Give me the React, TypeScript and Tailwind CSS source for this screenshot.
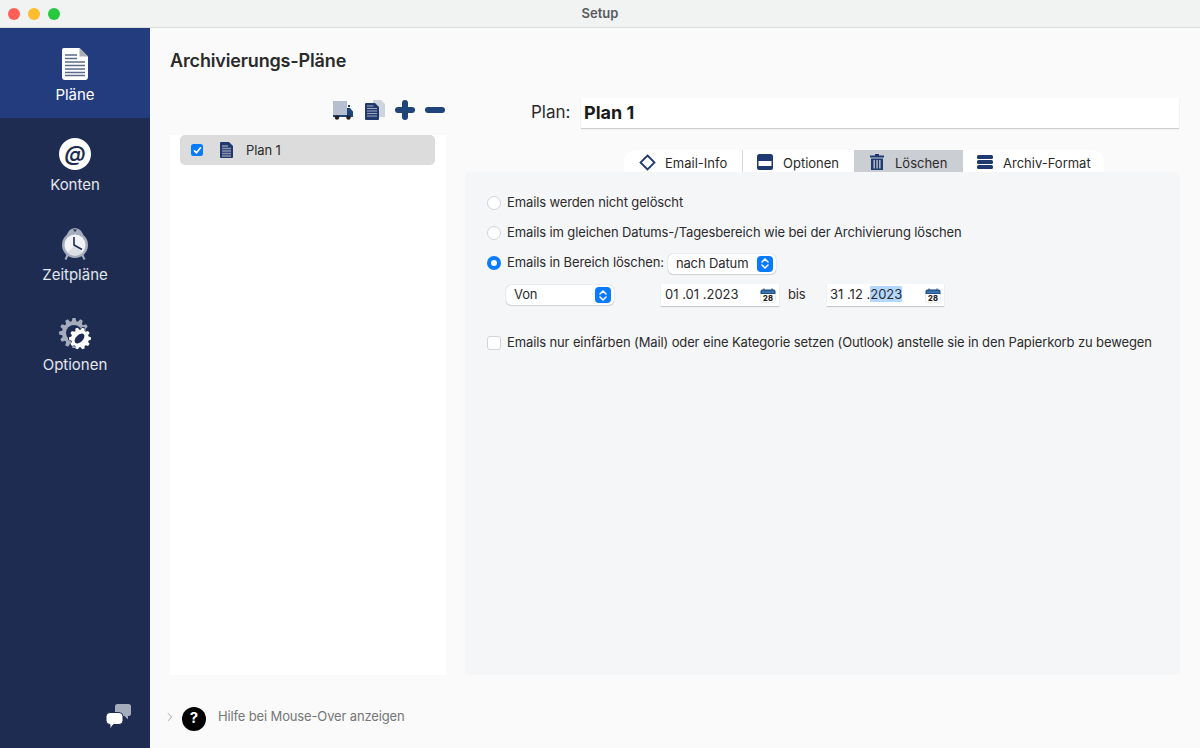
import { ChevronRight } from "lucide-react";

const FONT = "font-['Inter','Noto_Sans',sans-serif]";

function PlanIcon() {
  return (
    <svg width="28" height="32" viewBox="0 0 28 32">
      <path d="M3 0h15.5L27 8.5V29a3 3 0 0 1-3 3H4a3 3 0 0 1-3-3V2a2 2 0 0 1 2-2z" fill="#fff" />
      <path d="M18.5 0L27 8.5h-8.5z" fill="#a9adb5" />
      <path d="M4 7h12M4 10.5h12M4 14h20M4 17.5h20M4 21h20M4 24.5h20M4 27.5h20" stroke="#5d6a8a" strokeWidth="1.6" />
    </svg>
  );
}

function AtIcon() {
  return (
    <div className="flex h-8 w-8 items-center justify-center rounded-full bg-white pb-[2px] text-[21px] font-semibold italic leading-none text-[#1e2c52]">
      @
    </div>
  );
}

function ClockIcon() {
  return (
    <svg width="30" height="32" viewBox="0 0 30 32">
      <path d="M6 10Q8 0 15 0Q22 0 24 10z" fill="#a5adbd" />
      <path d="M13 1.5h4l-2 2.5z" fill="#1e2c52" />
      <path d="M8 26l-2.5 5.5M22 26l2.5 5.5" stroke="#a5adbd" strokeWidth="2" />
      <circle cx="15" cy="17" r="13" fill="#a5adbd" />
      <circle cx="15" cy="17" r="10.5" fill="#f2f3f6" />
      <path d="M7.5 24.5a10.5 10.5 0 0 0 15 0L15 17z" fill="#dcdfe6" />
      <path d="M14 9v8l8 4.5" stroke="#1e2c52" strokeWidth="1.6" fill="none" />
    </svg>
  );
}

function gearPath(cx: number, cy: number, r: number, teeth: number) {
  const pts: string[] = [];
  for (let i = 0; i < teeth; i++) {
    const a = (i / teeth) * Math.PI * 2;
    const w = Math.PI / teeth / 1.8;
    const inner = r * 0.8;
    const p = [
      [a - w * 1.3, inner],
      [a - w * 0.7, r],
      [a + w * 0.7, r],
      [a + w * 1.3, inner],
    ];
    p.forEach(([t, d]) => pts.push(`${(cx + Math.cos(t) * d).toFixed(2)},${(cy + Math.sin(t) * d).toFixed(2)}`));
  }
  return pts.join(" ");
}

function GearIcon() {
  return (
    <svg width="32" height="32" viewBox="0 0 32 32">
      <polygon points={gearPath(15, 15, 15, 12)} fill="#a5adbd" />
      <circle cx="15" cy="15" r="8" fill="#1e2c52" />
      <polygon points={gearPath(21, 20.5, 12, 10)} fill="#1e2c52" />
      <polygon points={gearPath(21, 20.5, 11, 10)} fill="#fff" />
      <ellipse cx="20.5" cy="20.5" rx="6" ry="3.5" transform="rotate(-45 20.5 20.5)" fill="#1e2c52" />
    </svg>
  );
}

function NavItem({ label, icon, active }: { label: string; icon: React.ReactNode; active?: boolean }) {
  return (
    <div className={`flex h-[90px] flex-col items-center pt-[20px] ${active ? "bg-[#233c7d]" : ""}`}>
      <div className="flex h-[32px] items-center justify-center">{icon}</div>
      <span className={`mt-[5px] text-[15px] leading-[20px] ${active ? "text-white" : "text-[#e4e6ec]"}`}>{label}</span>
    </div>
  );
}

function Radio({ on }: { on?: boolean }) {
  return on ? (
    <span className="flex h-[14px] w-[14px] items-center justify-center rounded-full bg-[#0a7aff]">
      <span className="h-[6px] w-[6px] rounded-full bg-white" />
    </span>
  ) : (
    <span className="h-[14px] w-[14px] rounded-full border border-[#d3d4d7] bg-white" />
  );
}

function Stepper() {
  return (
    <span className="flex h-[16px] w-[16px] items-center justify-center rounded-[4px] bg-[#0a7aff]">
      <svg width="10" height="13" viewBox="0 0 10 13" fill="none" stroke="#fff" strokeWidth="1.5" strokeLinecap="round" strokeLinejoin="round">
        <path d="M2 5l3-3 3 3M2 8l3 3 3-3" />
      </svg>
    </span>
  );
}

function Select({ label, className }: { label: string; className: string }) {
  return (
    <div className={`flex h-[20px] items-center justify-between rounded-[5px] bg-white pl-[8px] pr-[3px] text-[13px] text-[#2b2b2b] shadow-[0_0_1px_rgba(0,0,0,0.35),0_1px_1px_rgba(0,0,0,0.12)] ${className}`}>
      <span>{label}</span>
      <Stepper />
    </div>
  );
}

function CalIcon() {
  return (
    <svg width="16" height="15" viewBox="0 0 16 15">
      <rect x="0.5" y="1.5" width="15" height="13" rx="2" fill="#fdfdfd" stroke="#d5d8de" strokeWidth="0.5" />
      <path d="M0.5 6V3.5a2 2 0 0 1 2-2h11a2 2 0 0 1 2 2V6z" fill="#1f5590" />
      <path d="M4 0.5v2M12 0.5v2" stroke="#1f5590" strokeWidth="1.2" />
      <path d="M2 4h12" stroke="#6e9cc9" strokeWidth="0.8" />
      <text x="8" y="12.5" textAnchor="middle" fontSize="7.5" fontWeight="800" letterSpacing="0" fill="#1b1b1b">28</text>
    </svg>
  );
}

function DateField({ children, className }: { children: React.ReactNode; className: string }) {
  return (
    <div className={`flex h-[22px] items-center justify-between bg-white pr-[3px] text-[13px] tracking-normal text-[#2b2b2b] shadow-[0_1px_1px_rgba(0,0,0,0.18)] ${className}`}>
      <span>{children}</span>
      <CalIcon />
    </div>
  );
}

function Tab({ label, icon, active, className }: { label: string; icon: React.ReactNode; active?: boolean; className: string }) {
  return (
    <div className={`flex h-[22px] items-center text-[13px] text-[#2b2b2b] ${active ? "bg-[#cbced2]" : ""} ${className}`}>
      <span className="mt-[2px] flex w-[20px] justify-center">{icon}</span>
      <span className="ml-[8px] mt-[5px]">{label}</span>
    </div>
  );
}

export default function App() {
  return (
    <div className={`flex h-[748px] w-[1200px] flex-col overflow-hidden bg-[#fafafa] ${FONT}`}>
      <div className="relative flex h-[28px] shrink-0 items-center justify-center border-b border-[#dcdcdc] bg-[#f1f2f2] pt-[1px]">
        <div className="absolute left-[8px] top-[8px] flex gap-[8px]">
          <span className="h-[12px] w-[12px] rounded-full bg-[#fe5f57]" />
          <span className="h-[12px] w-[12px] rounded-full bg-[#febc2e]" />
          <span className="h-[12px] w-[12px] rounded-full bg-[#28c83f]" />
        </div>
        <span className="text-[13px] font-semibold text-[#5a5a5a]">Setup</span>
      </div>

      <div className="flex min-h-0 flex-1">
        <aside className="flex w-[150px] shrink-0 flex-col bg-[#1e2c52]">
          <NavItem label="Pläne" icon={<PlanIcon />} active />
          <NavItem label="Konten" icon={<AtIcon />} />
          <NavItem label="Zeitpläne" icon={<ClockIcon />} />
          <NavItem label="Optionen" icon={<GearIcon />} />
          <div className="mt-auto flex justify-end pb-[19px] pr-[19px]">
            <svg width="25" height="25" viewBox="0 0 25 25">
              <path d="M9 2.5A2.5 2.5 0 0 1 11.5 0h11A2.5 2.5 0 0 1 25 2.5v7a2.5 2.5 0 0 1-2.5 2.5H22v3.5L18.5 12H11.500A2.500 2.500 0 0 1 9 9.500z" fill="#a5adbd" />
              <path d="M4 8.500h9a4 4 0 0 1 4 4v4a4 4 0 0 1-4 4H7.500L4 25v-4.500a4 4 0 0 1-4-4v-4a4 4 0 0 1 4-4z" fill="#fff" stroke="#1e2c52" strokeWidth="1" />
            </svg>
          </div>
        </aside>

        <main className="flex min-w-0 flex-1 flex-col">
          <h1 className="ml-[20px] mt-[22px] text-[18px] font-semibold leading-[22px] tracking-[-0.15px] text-[#2a2a2a]">Archivierungs-Pläne</h1>

          <div className="flex min-h-0">
            <div className="ml-[20px] w-[276px] shrink-0">
              <div className="mt-[23px] flex h-[30px] items-center justify-end pr-[1px]">
                <svg width="20" height="19" viewBox="0 0 20 19">
                  <rect x="0" y="0" width="14" height="14" fill="#b5bfd0" />
                  <path d="M15 4h2v2h-2z" fill="#1f4479" />
                  <path d="M0 14h14V7h3l3 3.500V16H0z" fill="#1f4479" />
                  <circle cx="4" cy="16.500" r="2.200" fill="#222" />
                  <circle cx="15.500" cy="16.500" r="2.200" fill="#222" />
                </svg>
                <svg width="20" height="20" viewBox="0 0 20 20" className="ml-[12px]">
                  <path d="M8 0h8l4 4v13H8z" fill="#ced3dc" />
                  <path d="M1 3h9l4 4v12a1 1 0 0 1-1 1H1a1 1 0 0 1-1-1V4a1 1 0 0 1 1-1z" fill="#1f3a70" />
                  <path d="M2 6h6.500M2 8.500h10M2 11h10M2 13.500h10M2 16h10" stroke="#a5adbd" strokeWidth="1.200" />
                </svg>
                <svg width="20" height="20" viewBox="0 0 20 20" fill="none" stroke="#1f4479" strokeWidth="6" strokeLinecap="round" className="ml-[10px]">
                  <path d="M10 3v14M3 10h14" />
                </svg>
                <svg width="20" height="20" viewBox="0 0 20 20" fill="none" stroke="#1f4479" strokeWidth="6" strokeLinecap="round" className="ml-[10px]">
                  <path d="M3 10h14" />
                </svg>
              </div>
              <div className="mt-[10px] h-[540px] bg-white pl-[10px] pr-[11px]">
                <div className="flex h-[30px] items-center rounded-[5px] bg-[#dcdcdc] pl-[11px] text-[13px] tracking-[-0.1px] text-[#2b2b2b]">
                  <span className="flex h-[12px] w-[12px] items-center justify-center rounded-[2.5px] bg-[#0a7aff]">
                    <svg width="9" height="9" viewBox="0 0 9 9" fill="none" stroke="#fff" strokeWidth="1.7" strokeLinecap="round" strokeLinejoin="round">
                      <path d="M1.5 4.800l2 2 4-5" />
                    </svg>
                  </span>
                  <svg width="13" height="16" viewBox="0 0 13 16" className="ml-[17px]">
                    <path d="M1 0h8l4 4v11a1 1 0 0 1-1 1H1a1 1 0 0 1-1-1V1a1 1 0 0 1 1-1z" fill="#1f3a70" />
                    <path d="M2 4h6M2 6.500h9M2 9h9M2 11.500h9M2 14h9" stroke="#8d96ab" strokeWidth="1.300" />
                  </svg>
                  <span className="ml-[13px] mt-[2px]">Plan 1</span>
                </div>
              </div>
            </div>

            <div className="ml-[19px] w-[715px] shrink-0">
              <div className="mt-[26px] flex items-center pl-[66px]">
                <span className="w-[50px] text-[17px] text-[#2b2b2b]">Plan:</span>
                <div className="flex h-[30px] w-[598px] items-center bg-white pb-[2px] pl-[3px] text-[18px] font-bold text-[#1a1a1a] shadow-[0_1px_1px_rgba(0,0,0,0.18)]">Plan 1</div>
              </div>
              <div className="mt-[22px] flex">
                <div className="ml-[159px] flex overflow-hidden rounded-t-[12px] bg-white">
                  <Tab label="Email-Info" className="w-[119px] border-r border-[#d8d8d8] pl-[13px]" icon={
                    <svg width="17" height="17" viewBox="0 0 17 17" fill="none" stroke="#1f3a70" strokeWidth="1.800"><path d="M8.500 1.500l7 7-7 7-7-7z" /></svg>
                  } />
                  <Tab label="Optionen" className="w-[111px] pl-[12px]" icon={
                    <svg width="16" height="16" viewBox="0 0 16 16"><rect width="16" height="16" rx="2.500" fill="#1f3a70" /><rect x="1.500" y="7" width="13" height="5" fill="#fff" /></svg>
                  } />
                  <Tab label="Löschen" active className="w-[109px] pl-[13px]" icon={
                    <svg width="14" height="16" viewBox="0 0 14 16" fill="#1f3a70"><path d="M5 0h4v1.500h5V3.500H0V1.500h5zM1 4.500h12V16H1zM3.500 6v8.500h1.300V6zM6.400 6v8.500h1.300V6zM9.200 6v8.500h1.300V6z" fillRule="evenodd" /></svg>
                  } />
                  <Tab label="Archiv-Format" className="w-[141px] pl-[12px]" icon={
                    <svg width="16" height="14" viewBox="0 0 16 14" fill="#1f3a70"><rect width="16" height="4" rx="1.500" /><rect y="5" width="16" height="4" rx="1.500" /><rect y="10" width="16" height="4" rx="1.500" /></svg>
                  } />
                </div>
              </div>
              <div className="h-[503px] w-[715px] rounded-[5px] bg-[#f5f6f8] pl-[22px] pt-[23px] text-[13px] tracking-[-0.12px] text-[#2b2b2b]">
                <div className="flex h-[16px] items-center gap-[6px]"><Radio /><span>Emails werden nicht gelöscht</span></div>
                <div className="mt-[14px] flex h-[16px] items-center gap-[6px]"><Radio /><span>Emails im gleichen Datums-/Tagesbereich wie bei der Archivierung löschen</span></div>
                <div className="mt-[14px] flex h-[16px] items-center gap-[6px]">
                  <Radio on /><span>Emails in Bereich löschen:</span>
                  <Select label="nach Datum" className="-ml-[2px] mt-[1px] w-[108px]" />
                </div>
                <div className="mt-[13px] flex h-[22px] items-center">
                  <Select label="Von" className="ml-[19px] w-[108px]" />
                  <DateField className="ml-[47px] w-[118px] pl-[4px]">01 .01 .2023</DateField>
                  <span className="ml-[9px] w-[39px]">bis</span>
                  <DateField className="w-[117px] pl-[3px]">31 .12 .<span className="bg-[#b3d7ff]">2023</span></DateField>
                </div>
                <div className="mt-[29px] flex h-[16px] items-center gap-[6px]">
                  <span className="h-[14px] w-[14px] rounded-[3px] border border-[#d3d4d7] bg-white" />
                  <span>Emails nur einfärben (Mail) oder eine Kategorie setzen (Outlook) anstelle sie in den Papierkorb zu bewegen</span>
                </div>
              </div>
            </div>
          </div>

          <div className="mt-[30px] flex h-[24px] items-center pl-[13px]">
            <ChevronRight size={14} strokeWidth={1.6} className="text-[#a0a0a0]" />
            <span className="ml-[5px] mt-[3px] flex h-[24px] w-[24px] items-center justify-center rounded-full bg-black text-[15px] font-bold text-white">?</span>
            <span className="ml-[12px] text-[13px] tracking-[-0.14px] text-[#767676]">Hilfe bei Mouse-Over anzeigen</span>
          </div>
        </main>
      </div>
    </div>
  );
}
